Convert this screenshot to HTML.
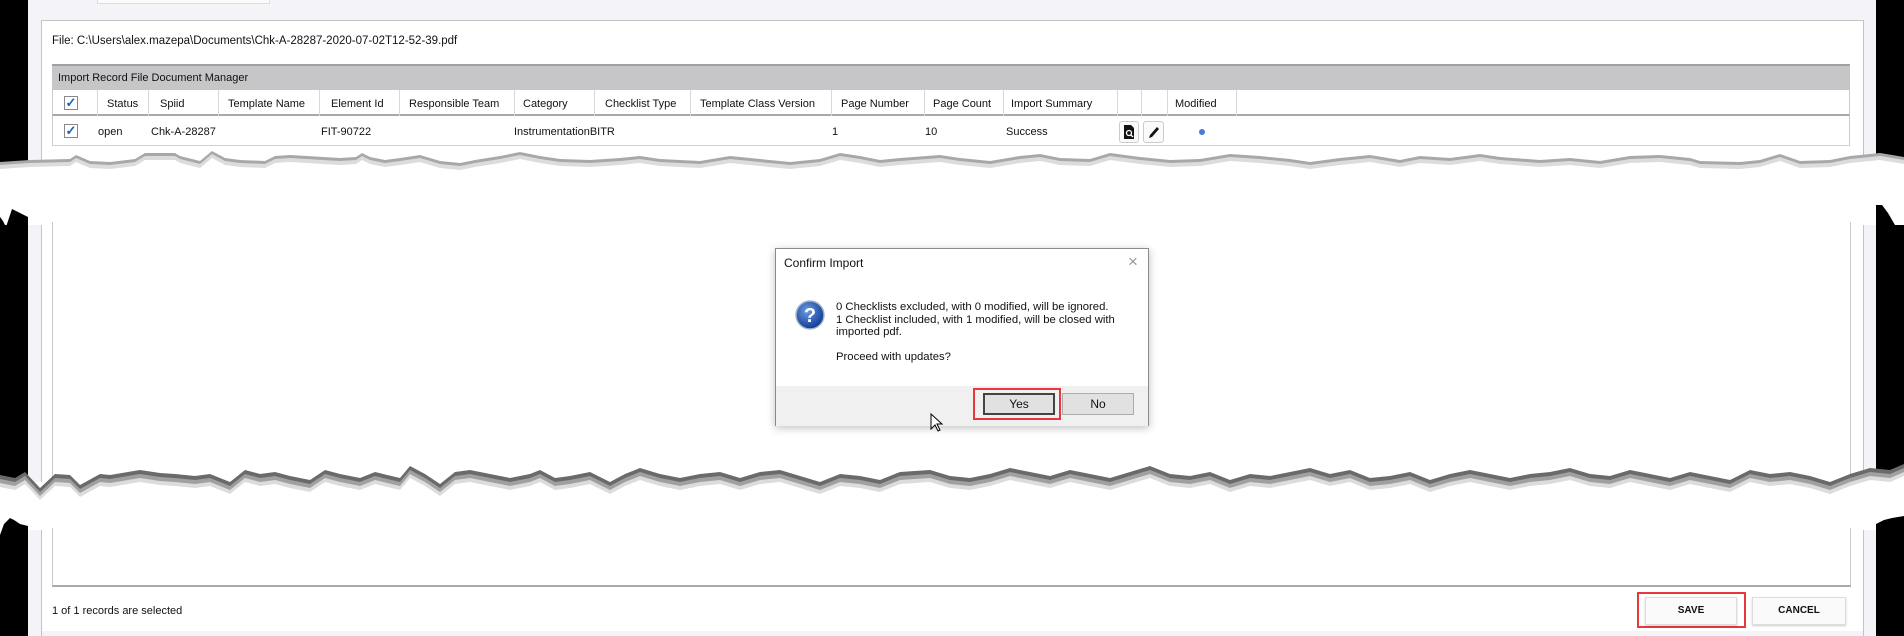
<!DOCTYPE html>
<html><head><meta charset="utf-8"><style>
*{box-sizing:border-box;margin:0;padding:0}
body{width:1904px;height:636px;position:relative;overflow:hidden;background:#fff;font-family:"Liberation Sans",sans-serif;color:#111}
.a{position:absolute}
.t{position:absolute;font-size:11px;white-space:nowrap;line-height:12px}
.vl{position:absolute;width:1px;background:#d8d8d8}
</style></head><body>
<!-- TOP PIECE -->
<div class="a" style="left:0;top:0;width:1904px;height:170px;background:#f4f3f7"></div>
<div class="a" style="left:97px;top:0;width:173px;height:4px;background:#fbfbfb;border:1px solid #ddd;border-top:none"></div>
<div class="a" style="left:41px;top:20px;width:1823px;height:160px;background:#fff;border:1px solid #c4c4c4"></div>
<div class="a" style="left:52px;top:25px;width:1800px;height:160px;background:#fff"></div>
<div class="t" style="left:52px;top:35px;font-size:11.5px">File: C:\Users\alex.mazepa\Documents\Chk-A-28287-2020-07-02T12-52-39.pdf</div>
<div class="a" style="left:52px;top:64px;width:1798px;height:26px;background:#c6c6c8;border-top:2px solid #a0a0a0"></div>
<div class="t" style="left:58px;top:72px">Import Record File Document Manager</div>
<div class="a" style="left:52px;top:90px;width:1798px;height:26px;border-bottom:2px solid #a8a8a8;border-left:1px solid #ccc;border-right:1px solid #ccc"></div>
<div class="a" style="left:52px;top:116px;width:1798px;height:30px;border-bottom:1px solid #d0d0d0;border-left:1px solid #ccc;border-right:1px solid #ccc"></div>
<div class="vl" style="left:97px;top:90px;height:26px"></div>
<div class="vl" style="left:148px;top:90px;height:26px"></div>
<div class="vl" style="left:218px;top:90px;height:26px"></div>
<div class="vl" style="left:319px;top:90px;height:26px"></div>
<div class="vl" style="left:399px;top:90px;height:26px"></div>
<div class="vl" style="left:514px;top:90px;height:26px"></div>
<div class="vl" style="left:594px;top:90px;height:26px"></div>
<div class="vl" style="left:690px;top:90px;height:26px"></div>
<div class="vl" style="left:831px;top:90px;height:26px"></div>
<div class="vl" style="left:924px;top:90px;height:26px"></div>
<div class="vl" style="left:1003px;top:90px;height:26px"></div>
<div class="vl" style="left:1117px;top:90px;height:26px"></div>
<div class="vl" style="left:1141px;top:90px;height:26px"></div>
<div class="vl" style="left:1167px;top:90px;height:26px"></div>
<div class="vl" style="left:1236px;top:90px;height:26px"></div>
<div class="a" style="left:64px;top:96px;width:14px;height:14px;border:1px solid #888;background:#fff;color:#1565c0;font-size:13px;line-height:12px;text-align:center;font-weight:bold">✓</div>
<div class="a" style="left:64px;top:124px;width:14px;height:14px;border:1px solid #888;background:#fff;color:#1565c0;font-size:13px;line-height:12px;text-align:center;font-weight:bold">✓</div>
<div class="t" style="left:107px;top:98px">Status</div>
<div class="t" style="left:160px;top:98px">Spiid</div>
<div class="t" style="left:228px;top:98px">Template Name</div>
<div class="t" style="left:331px;top:98px">Element Id</div>
<div class="t" style="left:409px;top:98px">Responsible Team</div>
<div class="t" style="left:523px;top:98px">Category</div>
<div class="t" style="left:605px;top:98px">Checklist Type</div>
<div class="t" style="left:700px;top:98px">Template Class Version</div>
<div class="t" style="left:841px;top:98px">Page Number</div>
<div class="t" style="left:933px;top:98px">Page Count</div>
<div class="t" style="left:1011px;top:98px">Import Summary</div>
<div class="t" style="left:1175px;top:98px">Modified</div>
<div class="t" style="left:98px;top:126px">open</div>
<div class="t" style="left:151px;top:126px">Chk-A-28287</div>
<div class="t" style="left:321px;top:126px">FIT-90722</div>
<div class="t" style="left:514px;top:126px">InstrumentationBITR</div>
<div class="t" style="left:832px;top:126px">1</div>
<div class="t" style="left:925px;top:126px">10</div>
<div class="t" style="left:1006px;top:126px">Success</div>
<div class="a" style="left:1119px;top:121px;width:20px;height:22px;border:1px solid #ccc;border-radius:3px;background:#fafafa">
<svg width="18" height="20" viewBox="0 0 18 20"><path d="M4 3h7l3 3v11H4z" fill="#111"/><circle cx="9" cy="11" r="2.5" fill="none" stroke="#fff" stroke-width="1.3"/><path d="M11 13l2 2" stroke="#fff" stroke-width="1.3"/></svg></div>
<div class="a" style="left:1143px;top:121px;width:21px;height:22px;border:1px solid #ccc;border-radius:3px;background:#fafafa">
<svg width="19" height="20" viewBox="0 0 19 20"><path d="M5 16l1-3 7-8 2 2-7 8z" fill="#111"/></svg></div>
<div class="a" style="left:1199px;top:129px;width:6px;height:6px;border-radius:50%;background:#4a7bd6"></div>
<div class="a" style="left:0;top:0;width:28px;height:168px;background:#000"></div>
<div class="a" style="left:1876px;top:0;width:28px;height:172px;background:#000"></div>
<svg class="a" style="left:0;top:150px" width="1904" height="60">
<polygon points="0,12 30,10 70,9 76,5 90,11 110,12 135,9 145,3 175,3 180,6 200,11 212,1 225,8 240,10 265,11 275,6 290,5 340,8 356,7 362,3 370,7 385,10 400,8 420,5 440,11 460,13 475,10 500,6 520,2 540,6 560,9 590,10 620,8 640,6 660,9 700,11 730,6 760,9 790,12 820,9 840,3 860,6 880,10 900,8 940,5 960,8 990,11 1020,6 1040,4 1060,8 1090,9 1110,3 1140,7 1170,10 1200,9 1230,4 1260,6 1290,9 1310,12 1340,8 1370,5 1400,10 1420,6 1450,8 1480,4 1500,7 1540,10 1570,8 1600,11 1630,6 1660,5 1690,8 1700,11 1740,12 1760,10 1780,4 1800,11 1830,10 1850,6 1880,3 1904,7 1904,60 0,60" fill="#a8a8a8"/>
<polygon points="0,15 30,13 70,12 76,8 90,14 110,15 135,12 145,6 175,6 180,9 200,14 212,4 225,11 240,13 265,14 275,9 290,8 340,11 356,10 362,6 370,10 385,13 400,11 420,8 440,14 460,16 475,13 500,9 520,5 540,9 560,12 590,13 620,11 640,9 660,12 700,14 730,9 760,12 790,15 820,12 840,6 860,9 880,13 900,11 940,8 960,11 990,14 1020,9 1040,7 1060,11 1090,12 1110,6 1140,10 1170,13 1200,12 1230,7 1260,9 1290,12 1310,15 1340,11 1370,8 1400,13 1420,9 1450,11 1480,7 1500,10 1540,13 1570,11 1600,14 1630,9 1660,8 1690,11 1700,14 1740,15 1760,13 1780,7 1800,14 1830,13 1850,9 1880,6 1904,10 1904,60 0,60" fill="#dcdcdc"/>
<polygon points="0,19 30,17 70,16 76,12 90,18 110,19 135,16 145,10 175,10 180,13 200,18 212,8 225,15 240,17 265,18 275,13 290,12 340,15 356,14 362,10 370,14 385,17 400,15 420,12 440,18 460,20 475,17 500,13 520,9 540,13 560,16 590,17 620,15 640,13 660,16 700,18 730,13 760,16 790,19 820,16 840,10 860,13 880,17 900,15 940,12 960,15 990,18 1020,13 1040,11 1060,15 1090,16 1110,10 1140,14 1170,17 1200,16 1230,11 1260,13 1290,16 1310,19 1340,15 1370,12 1400,17 1420,13 1450,15 1480,11 1500,14 1540,17 1570,15 1600,18 1630,13 1660,12 1690,15 1700,18 1740,19 1760,17 1780,11 1800,18 1830,17 1850,13 1880,10 1904,14 1904,60 0,60" fill="#fff"/>
</svg>
<!-- MIDDLE PIECE -->
<div class="a" style="left:0;top:225px;width:28px;height:255px;background:#000"></div>
<div class="a" style="left:1876px;top:225px;width:28px;height:255px;background:#000"></div>
<div class="a" style="left:28px;top:225px;width:14px;height:257px;background:#f4f3f7"></div>
<div class="a" style="left:41px;top:225px;width:1px;height:257px;background:#c4c4c4"></div>
<div class="a" style="left:52px;top:222px;width:1px;height:260px;background:#c8c8c8"></div>
<div class="a" style="left:1850px;top:222px;width:1px;height:260px;background:#c8c8c8"></div>
<div class="a" style="left:1863px;top:225px;width:13px;height:257px;background:#f4f3f7;border-left:1px solid #c4c4c4"></div>
<svg class="a" style="left:0;top:205px" width="1904" height="35"><polygon points="0,12 3,16 6,22 12,4 20,8 28,12 28,35 0,35" fill="#000"/><polygon points="1876,0 1882,0 1888,8 1895,20 1904,20 1904,35 1876,35" fill="#000"/></svg>
<div class="a" style="left:775px;top:248px;width:374px;height:178px;background:#fff;border:1px solid #8a8a8a;box-shadow:0 2px 8px rgba(0,0,0,.25)">
<div class="a" style="left:0;top:137px;width:372px;height:40px;background:#f0f0f0"></div>
</div>
<div class="t" style="left:784px;top:256px;font-size:12px;line-height:14px">Confirm Import</div>
<div class="t" style="left:1128px;top:253px;font-size:17px;color:#999;line-height:18px">×</div>
<svg class="a" style="left:795px;top:300px" width="30" height="30"><defs><radialGradient id="g" cx="40%" cy="35%" r="65%"><stop offset="0" stop-color="#6e9be0"/><stop offset="1" stop-color="#0d3b9a"/></radialGradient></defs><circle cx="15" cy="15" r="14" fill="url(#g)" stroke="#a8b4c8" stroke-width="1.5"/><text x="15" y="22" font-family="Liberation Sans" font-weight="bold" font-size="20" fill="#fff" text-anchor="middle">?</text></svg>
<div class="t" style="left:836px;top:301px;font-size:11.3px;line-height:12.5px">0 Checklists excluded, with 0 modified, will be ignored.<br>1 Checklist included, with 1 modified, will be closed with<br>imported pdf.<br><br>Proceed with updates?</div>
<div class="a" style="left:973px;top:388px;width:88px;height:32px;border:2px solid #e8383d"></div>
<div class="a" style="left:983px;top:393px;width:72px;height:22px;background:#e1e1e1;border:2px solid #444;font-size:12px;text-align:center;line-height:18px">Yes</div>
<div class="a" style="left:1062px;top:393px;width:72px;height:22px;background:#e1e1e1;border:1px solid #adadad;font-size:12px;text-align:center;line-height:20px">No</div>
<svg class="a" style="left:930px;top:413px" width="14" height="20"><path d="M1 1v15l4-4 3 6 2-1-3-6h5z" fill="#fff" stroke="#000" stroke-width="1"/></svg>
<!-- jagged 2 -->
<svg class="a" style="left:0;top:460px" width="1904" height="70">
<polygon points="0,15 15,18 25,12 40,28 55,14 70,15 80,25 100,14 110,15 140,10 160,13 175,14 195,16 210,14 230,22 245,10 260,14 275,12 290,16 310,20 325,10 340,14 360,18 375,12 400,18 410,6 425,14 440,24 455,12 470,10 490,14 510,18 530,14 540,10 555,18 570,16 590,12 610,22 625,14 640,8 660,14 680,18 700,14 720,12 740,18 760,12 780,10 800,16 820,22 840,14 860,16 880,20 900,12 930,10 950,16 970,18 990,14 1010,8 1030,12 1050,16 1070,10 1090,14 1110,18 1130,12 1150,6 1170,14 1190,16 1210,12 1230,20 1250,14 1270,16 1290,12 1310,8 1330,14 1350,10 1370,18 1390,16 1410,12 1430,20 1450,14 1470,10 1490,14 1510,18 1530,14 1550,12 1570,8 1590,14 1610,16 1630,10 1650,14 1670,18 1690,12 1710,16 1730,20 1750,10 1770,14 1790,12 1810,16 1830,22 1850,14 1870,8 1890,10 1904,4 1904,70 0,70" fill="#6a6a6a"/>
<polygon points="0,19 15,22 25,16 40,32 55,18 70,19 80,29 100,18 110,19 140,14 160,17 175,18 195,20 210,18 230,26 245,14 260,18 275,16 290,20 310,24 325,14 340,18 360,22 375,16 400,22 410,10 425,18 440,28 455,16 470,14 490,18 510,22 530,18 540,14 555,22 570,20 590,16 610,26 625,18 640,12 660,18 680,22 700,18 720,16 740,22 760,16 780,14 800,20 820,26 840,18 860,20 880,24 900,16 930,14 950,20 970,22 990,18 1010,12 1030,16 1050,20 1070,14 1090,18 1110,22 1130,16 1150,10 1170,18 1190,20 1210,16 1230,24 1250,18 1270,20 1290,16 1310,12 1330,18 1350,14 1370,22 1390,20 1410,16 1430,24 1450,18 1470,14 1490,18 1510,22 1530,18 1550,16 1570,12 1590,18 1610,20 1630,14 1650,18 1670,22 1690,16 1710,20 1730,24 1750,14 1770,18 1790,16 1810,20 1830,26 1850,18 1870,12 1890,14 1904,8 1904,70 0,70" fill="#a0a0a0"/>
<polygon points="0,23 15,26 25,20 40,36 55,22 70,23 80,33 100,22 110,23 140,18 160,21 175,22 195,24 210,22 230,30 245,18 260,22 275,20 290,24 310,28 325,18 340,22 360,26 375,20 400,26 410,14 425,22 440,32 455,20 470,18 490,22 510,26 530,22 540,18 555,26 570,24 590,20 610,30 625,22 640,16 660,22 680,26 700,22 720,20 740,26 760,20 780,18 800,24 820,30 840,22 860,24 880,28 900,20 930,18 950,24 970,26 990,22 1010,16 1030,20 1050,24 1070,18 1090,22 1110,26 1130,20 1150,14 1170,22 1190,24 1210,20 1230,28 1250,22 1270,24 1290,20 1310,16 1330,22 1350,18 1370,26 1390,24 1410,20 1430,28 1450,22 1470,18 1490,22 1510,26 1530,22 1550,20 1570,16 1590,22 1610,24 1630,18 1650,22 1670,26 1690,20 1710,24 1730,28 1750,18 1770,22 1790,20 1810,24 1830,30 1850,22 1870,16 1890,18 1904,12 1904,70 0,70" fill="#dcdcdc"/>
<polygon points="0,27 15,30 25,24 40,40 55,26 70,27 80,37 100,26 110,27 140,22 160,25 175,26 195,28 210,26 230,34 245,22 260,26 275,24 290,28 310,32 325,22 340,26 360,30 375,24 400,30 410,18 425,26 440,36 455,24 470,22 490,26 510,30 530,26 540,22 555,30 570,28 590,24 610,34 625,26 640,20 660,26 680,30 700,26 720,24 740,30 760,24 780,22 800,28 820,34 840,26 860,28 880,32 900,24 930,22 950,28 970,30 990,26 1010,20 1030,24 1050,28 1070,22 1090,26 1110,30 1130,24 1150,18 1170,26 1190,28 1210,24 1230,32 1250,26 1270,28 1290,24 1310,20 1330,26 1350,22 1370,30 1390,28 1410,24 1430,32 1450,26 1470,22 1490,26 1510,30 1530,26 1550,24 1570,20 1590,26 1610,28 1630,22 1650,26 1670,30 1690,24 1710,28 1730,32 1750,22 1770,26 1790,24 1810,28 1830,34 1850,26 1870,20 1890,22 1904,16 1904,70 0,70" fill="#fff"/>
</svg>
<!-- BOTTOM PIECE -->
<div class="a" style="left:28px;top:530px;width:14px;height:106px;background:#f4f3f7"></div>
<div class="a" style="left:41px;top:530px;width:1px;height:106px;background:#c4c4c4"></div>
<div class="a" style="left:52px;top:528px;width:1799px;height:59px;border-left:1px solid #c8c8c8;border-right:1px solid #c8c8c8;border-bottom:2px solid #a8a8a8"></div>
<div class="a" style="left:1863px;top:530px;width:13px;height:106px;background:#f4f3f7;border-left:1px solid #c4c4c4"></div>
<div class="a" style="left:42px;top:631px;width:1821px;height:5px;background:#f4f3f7"></div>
<svg class="a" style="left:0;top:510px" width="1904" height="126"><polygon points="0,25 4,14 10,8 14,10 20,14 28,16 28,126 0,126" fill="#000"/><polygon points="1876,14 1884,10 1892,8 1904,6 1904,126 1876,126" fill="#000"/></svg>
<div class="t" style="left:52px;top:605px">1 of 1 records are selected</div>
<div class="a" style="left:1637px;top:592px;width:109px;height:36px;border:2px solid #e8383d"></div>
<div class="a" style="left:1645px;top:597px;width:92px;height:28px;background:#fafafa;border:1px solid #ddd;box-shadow:0 1px 2px rgba(0,0,0,.2);font-size:10px;font-weight:bold;text-align:center;line-height:26px">SAVE</div>
<div class="a" style="left:1752px;top:597px;width:94px;height:28px;background:#fafafa;border:1px solid #ddd;box-shadow:0 1px 2px rgba(0,0,0,.2);font-size:10px;font-weight:bold;text-align:center;line-height:26px">CANCEL</div>
</body></html>
